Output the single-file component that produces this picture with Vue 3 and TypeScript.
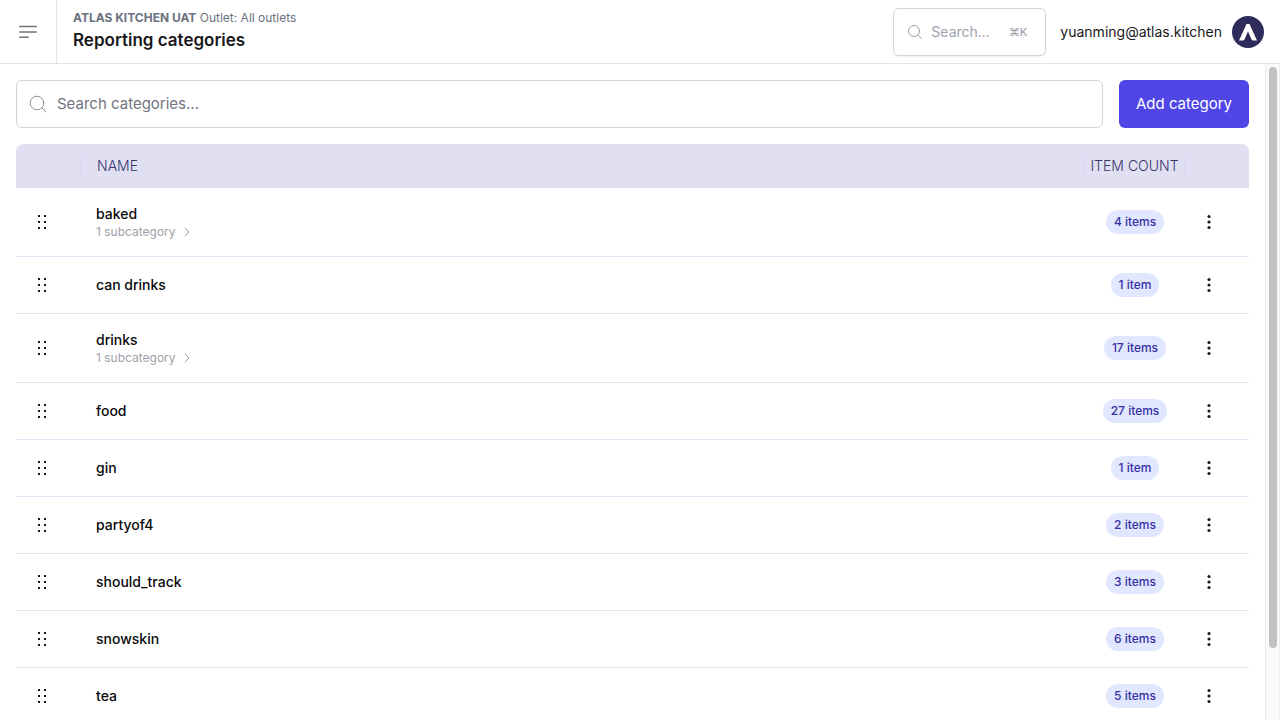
<script setup lang="ts">
import { ref } from 'vue'

interface Category {
  name: string
  items: number
  subcategories: number
}

const query = ref('')

const categories: Category[] = [
  { name: 'baked', items: 4, subcategories: 1 },
  { name: 'can drinks', items: 1, subcategories: 0 },
  { name: 'drinks', items: 17, subcategories: 1 },
  { name: 'food', items: 27, subcategories: 0 },
  { name: 'gin', items: 1, subcategories: 0 },
  { name: 'partyof4', items: 2, subcategories: 0 },
  { name: 'should_track', items: 3, subcategories: 0 },
  { name: 'snowskin', items: 6, subcategories: 0 },
  { name: 'tea', items: 5, subcategories: 0 },
]

const plural = (n: number, one: string, many: string): string => `${n} ${n === 1 ? one : many}`
</script>

<template>
  <div class="app">
    <header class="topbar">
      <button class="menu" type="button" aria-label="Open menu">
        <svg width="24" height="24" viewBox="0 0 24 24" fill="none" stroke="currentColor" stroke-width="1.4" stroke-linecap="round">
          <path d="M3.750 6.500h16.500M3.750 12h16.500M3.750 17.250h8.500" />
        </svg>
      </button>
      <div class="heading">
        <p class="context"><strong>ATLAS KITCHEN UAT</strong> Outlet: All outlets</p>
        <h1>Reporting categories</h1>
      </div>
      <button class="quick" type="button">
        <svg width="16" height="16" viewBox="0 0 16 16" fill="none" stroke="currentColor" stroke-linecap="round">
          <circle cx="7" cy="7" r="5.500" />
          <path d="M11 11l3.500 3.500" />
        </svg>
        <span class="quick-label">Search...</span>
        <kbd>⌘K</kbd>
      </button>
      <a class="account" href="#">
        <span>yuanming@atlas.kitchen</span>
        <svg width="32" height="32" viewBox="0 0 32 32">
          <circle cx="16" cy="16" r="16" fill="#2f2c5c" />
          <path d="M14.500 8h3L25 24.500h-3.500q-1.500 0-2.100-1.300L16 15.200l-3.400 8q-.6 1.300-2.100 1.300H7z" fill="#fff" />
        </svg>
      </a>
    </header>

    <div class="body">
      <main class="content">
        <div class="tools">
          <label class="search">
            <svg width="20" height="20" viewBox="0 0 20 20" fill="none" stroke="currentColor" stroke-linecap="round">
              <circle cx="9" cy="9" r="6.800" />
              <path d="M14 14l4 4" />
            </svg>
            <input v-model="query" type="text" placeholder="Search categories..." aria-label="Search categories" />
          </label>
          <button class="add" type="button">Add category</button>
        </div>

        <table>
          <colgroup>
            <col class="c-drag" />
            <col />
            <col class="c-count" />
            <col class="c-more" />
          </colgroup>
          <thead>
            <tr>
              <th><div class="cell"></div></th>
              <th><div class="cell">NAME</div></th>
              <th><div class="cell count">ITEM COUNT</div></th>
              <th></th>
            </tr>
          </thead>
          <tbody>
            <tr v-for="c in categories" :key="c.name" :class="{ tall: c.subcategories > 0 }">
              <td class="drag">
                <button type="button" :aria-label="`Reorder ${c.name}`">
                  <svg width="20" height="20" viewBox="0 0 20 20" fill="currentColor" shape-rendering="crispEdges">
                    <path d="M6 3h2v2H6zM12 3h2v2h-2zM6 9h2v2H6zM12 9h2v2h-2zM6 15h2v2H6zM12 15h2v2h-2z" />
                  </svg>
                </button>
              </td>
              <td class="name">
                <div class="title">{{ c.name }}</div>
                <a v-if="c.subcategories" class="sub" href="#">
                  {{ plural(c.subcategories, 'subcategory', 'subcategories') }}
                  <svg width="12" height="12" viewBox="0 0 12 12" fill="none" stroke="currentColor" stroke-linecap="round" stroke-linejoin="round">
                    <path d="M4 2l4 4-4 4" />
                  </svg>
                </a>
              </td>
              <td class="amount"><span class="pill">{{ plural(c.items, 'item', 'items') }}</span></td>
              <td class="more">
                <button type="button" :aria-label="`Actions for ${c.name}`">
                  <svg width="20" height="20" viewBox="0 0 20 20" fill="currentColor">
                    <circle cx="10" cy="4.500" r="1.550" />
                    <circle cx="10" cy="10" r="1.550" />
                    <circle cx="10" cy="15.500" r="1.550" />
                  </svg>
                </button>
              </td>
            </tr>
          </tbody>
        </table>
      </main>
      <div class="scrolltrack" aria-hidden="true"><div class="thumb"></div></div>
    </div>
  </div>
</template>

<style>
body {
  margin: 0;
  overflow: hidden;
}
</style>

<style scoped>
.app {
  display: flex;
  flex-direction: column;
  height: 100vh;
  background: #fff;
  color: #18181b;
  font-family: Inter, "Liberation Sans", sans-serif;
  font-size: 14px;
  line-height: 20px;
}
* {
  box-sizing: border-box;
}
button {
  font: inherit;
  color: inherit;
  background: none;
  border: 0;
  padding: 0;
  cursor: pointer;
}
svg {
  display: block;
  flex: none;
}
a {
  color: inherit;
  text-decoration: none;
}
.topbar {
  display: flex;
  align-items: center;
  flex: none;
  height: 64px;
  padding-right: 16px;
  border-bottom: 1px solid #e4e4e7;
}
.menu {
  display: flex;
  align-items: center;
  justify-content: center;
  align-self: stretch;
  width: 57px;
  border-right: 1px solid #e4e4e7;
  color: #71717a;
}
.heading {
  flex: 1;
  padding: 0 0 4px 16px;
}
.context {
  margin: 0;
  font-size: 12px;
  color: #6b7280;
}
h1 {
  margin: 0;
  font-size: 17px;
  line-height: 24px;
  font-weight: 600;
}
.quick {
  display: flex;
  align-items: center;
  width: 153px;
  height: 48px;
  padding: 0 18px 0 13px;
  border: 1px solid #d4d4d8;
  border-radius: 6px;
  box-shadow: 0 1px 2px rgba(0, 0, 0, 0.06);
  color: #9ca3af;
}
.quick-label {
  flex: 1;
  padding-left: 8px;
  text-align: left;
}
kbd {
  font-family: Inter, "DejaVu Sans", sans-serif;
  font-size: 11px;
  font-weight: 500;
}
.account {
  display: flex;
  align-items: center;
  gap: 10px;
  margin-left: 14px;
}
.body {
  display: flex;
  flex: 1;
  min-height: 0;
}
.content {
  flex: 1;
  min-width: 0;
  padding: 16px;
  overflow: hidden;
}
.scrolltrack {
  flex: none;
  width: 15px;
  padding: 3px 2px 0 3px;
  background: #fafafa;
  border-left: 1px solid #e8e8e8;
  border-right: 1px solid #ededed;
}
.thumb {
  width: 8px;
  height: 89%;
  border-radius: 4px;
  background: #c1c1c1;
}
.tools {
  display: flex;
  gap: 16px;
  margin-bottom: 16px;
}
.search {
  display: flex;
  align-items: center;
  flex: 1;
  gap: 9px;
  height: 48px;
  padding: 0 11px;
  border: 1px solid #d4d4d8;
  border-radius: 6px;
  color: #8b8f98;
}
.search input {
  flex: 1;
  min-width: 0;
  padding: 0;
  border: 0;
  outline: 0;
  background: none;
  font: inherit;
  font-size: 15px;
  line-height: 24px;
  color: #18181b;
}
.search input::placeholder {
  color: #71757e;
  opacity: 1;
}
.add {
  width: 130px;
  height: 48px;
  border-radius: 6px;
  background: #4f46e5;
  color: #fff;
  font-size: 15px;
}
table {
  width: 100%;
  table-layout: fixed;
  border-spacing: 0;
}
.c-drag {
  width: 65px;
}
.c-count {
  width: 100px;
}
.c-more {
  width: 64px;
}
th {
  height: 44px;
  padding: 0;
  background: #e0e0f2;
  color: #37346b;
  font-weight: 300;
  text-align: left;
}
th:first-child {
  border-radius: 8px 0 0 0;
}
th:last-child {
  border-radius: 0 8px 0 0;
}
.cell {
  height: 20px;
  padding-left: 16px;
  border-right: 1px solid #d8d8f2;
}
.cell.count {
  padding: 0;
  text-align: center;
}
td {
  height: 57px;
  padding: 0;
  border-bottom: 1px solid #e4e4f4;
}
.tall td {
  height: 69px;
}
td button {
  display: block;
}
.drag button {
  margin-left: 16px;
}
.name {
  padding-left: 15px;
}
.title {
  font-weight: 500;
  color: #09090b;
}
.sub {
  display: flex;
  align-items: center;
  gap: 5px;
  font-size: 12px;
  line-height: 16px;
  color: #a1a1aa;
}
.amount {
  text-align: center;
}
.pill {
  display: inline-block;
  padding: 0 8px;
  border-radius: 12px;
  background: #e0e7ff;
  color: #3730a3;
  font-size: 12px;
  line-height: 24px;
  font-weight: 500;
}
.more button {
  margin-left: 14px;
}
</style>
